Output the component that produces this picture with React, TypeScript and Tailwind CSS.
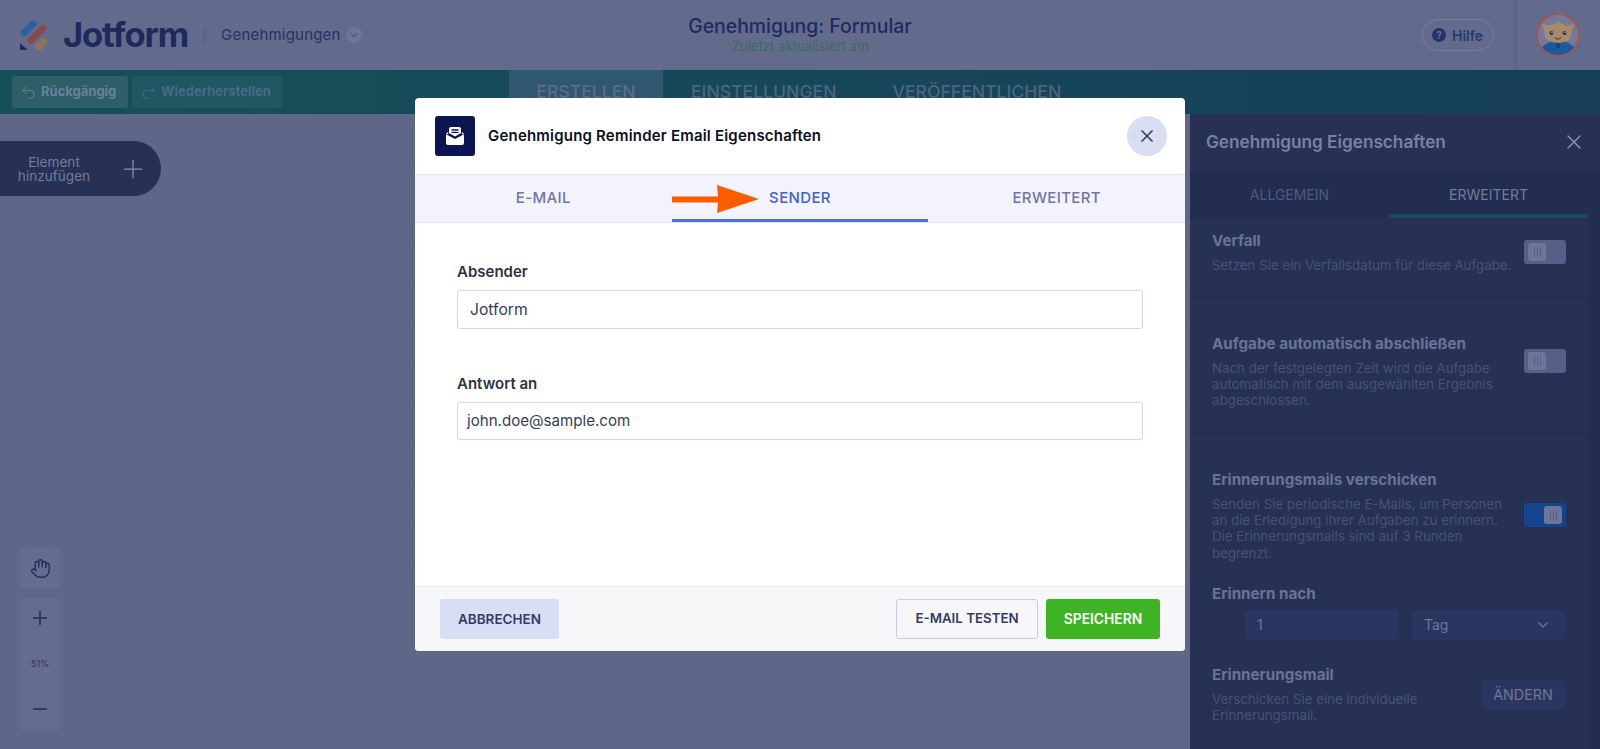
import { ChevronDown, Hand, Minus, Plus, Redo2, Undo2, X } from "lucide-react";

function Logo() {
  return (
    <svg width="30" height="32" viewBox="19 16 30 32" className="shrink-0">
      <line x1="24" y1="29.5" x2="33" y2="21" stroke="#2a60a4" strokeWidth="7" strokeLinecap="round" />
      <line x1="31" y1="37" x2="43" y2="25.5" stroke="#87494f" strokeWidth="7" strokeLinecap="round" />
      <line x1="38.5" y1="43.5" x2="43.5" y2="38.5" stroke="#8f7353" strokeWidth="7" strokeLinecap="round" />
      <path d="M20 40 L27.5 47 H21.5 Q20 47 20 45.5 Z" fill="#1c2a5c" />
    </svg>
  );
}

function Avatar() {
  return (
    <svg width="44" height="44" viewBox="0 0 44 44" className="shrink-0">
      <defs>
        <clipPath id="av"><circle cx="22" cy="22" r="20" /></clipPath>
      </defs>
      <circle cx="22" cy="22" r="21" fill="#74799c" stroke="#a5544c" strokeWidth="1.8" />
      <g clipPath="url(#av)">
        <path d="M3 44 L5 35 Q10 30 16 28 H28 Q34 30 39 35 L41 44 Z" fill="#1c5a9c" />
        <path d="M20 29 h4 v6 h-4 Z" fill="#16467e" />
        <path d="M6 11 L14 12.5 Q18 10.5 20 10 L21.5 7.5 L24 10 Q27 10.5 30 12.5 L38 11 L35.5 19 Q37 29 22 30 Q7 29 8.5 19 Z" fill="#a68a6a" />
        <circle cx="15.5" cy="20" r="2" fill="#28325c" />
        <circle cx="16" cy="19.4" r="0.6" fill="#c8cce0" />
        <circle cx="28.5" cy="20" r="2" fill="#28325c" />
        <circle cx="29" cy="19.4" r="0.6" fill="#c8cce0" />
        <path d="M19 24.5 Q22 27.5 25 24.5" stroke="#7c3a58" strokeWidth="1.3" fill="none" />
      </g>
    </svg>
  );
}

function MailIcon() {
  return (
    <svg width="20" height="20" viewBox="0 0 20 20">
      <path d="M4 7 V3 a2 2 0 0 1 2-2 h8 a2 2 0 0 1 2 2 V7 L10 10.5 Z" fill="#fff" />
      <rect x="6.5" y="3.2" width="7" height="1.5" fill="#0a1551" />
      <rect x="6.5" y="5.8" width="7" height="1.3" fill="#0a1551" />
      <path d="M1 8.2 L10 13 L19 8.2 V17 a2 2 0 0 1-2 2 H3 a2 2 0 0 1-2-2 Z" fill="#fff" />
      <path d="M1 7.5 L3.2 6 V8.6 Z M19 7.5 L16.8 6 V8.6 Z" fill="#fff" />
    </svg>
  );
}

function Toggle({ on }: { on?: boolean }) {
  return (
    <div className={`flex h-6 w-[42px] shrink-0 items-center rounded-[3px] px-1 ${on ? "justify-end bg-[#15448f]" : "justify-start bg-[#565f87]"}`}>
      <div className="flex h-[18px] w-[18px] items-center justify-center gap-[2px] rounded-[3px] bg-[#6e7597]">
        <span className="h-2.5 w-px bg-[#565f87]" />
        <span className="h-2.5 w-px bg-[#565f87]" />
        <span className="h-2.5 w-px bg-[#565f87]" />
      </div>
    </div>
  );
}

const tabTitle = "text-[15.2px] font-bold leading-5 text-[#6a7396]";
const desc = "text-[13.3px] leading-[16.2px] text-[#485274]";

export default function App() {
  return (
    <div className="relative flex h-[749px] w-full flex-col overflow-hidden bg-[#5f6688] font-['Inter','Liberation_Sans',sans-serif]">
      <header className="grid h-[70px] shrink-0 grid-cols-[1fr_auto_1fr] items-center bg-[#636b8c]">
        <div className="flex items-center pl-[19px]">
          <Logo />
          <span className="ml-[14px] text-[34.5px] font-bold leading-none tracking-[-1.1px] text-[#1c2a5c]">Jotform</span>
          <span className="ml-[16px] h-[18px] w-px bg-[#565e82]" />
          <span className="ml-[16px] text-[15px] tracking-[0.2px] text-[#263365]">Genehmigungen</span>
          <span className="ml-[5px] flex h-4 w-4 items-center justify-center rounded-full bg-[#6e7597]">
            <ChevronDown size={12} strokeWidth={1.6} className="text-[#263365]" />
          </span>
        </div>
        <div className="flex flex-col items-center pb-[2px]">
          <span className="text-[19.4px] font-medium leading-6 text-[#1e2a5e]">Genehmigung: Formular</span>
          <span className="-mt-px text-[13.2px] leading-[18px] text-[#3a6a5e]">Zuletzt aktualisiert am</span>
        </div>
        <div className="flex h-full items-center justify-end">
          <div className="flex h-8 w-[72px] items-center rounded-full border border-[#747ca2] pl-[9px]">
            <span className="flex h-[14px] w-[14px] items-center justify-center rounded-full bg-[#243272] text-[10px] font-bold text-[#636b8c]">?</span>
            <span className="ml-[6px] text-[14px] font-semibold text-[#263a72]">Hilfe</span>
          </div>
          <div className="ml-[21px] flex h-full w-[85px] items-center justify-center border-l border-[#565e82]">
            <Avatar />
          </div>
        </div>
      </header>

      <div className="flex h-[44px] shrink-0 bg-gradient-to-r from-[#155058] to-[#173f58]">
        <div className="flex w-[509px] shrink-0 items-center gap-1 pl-3">
          <div className="flex h-8 w-[116px] items-center gap-1 rounded-[3px] bg-[#2e5f68] pl-2 text-[13px] font-bold text-[#69819a]">
            <Undo2 size={17} strokeWidth={1.3} />
            Rückgängig
          </div>
          <div className="flex h-8 w-[151px] items-center gap-1 rounded-[3px] bg-[#205562] pl-2 text-[13px] font-bold text-[#436d82]">
            <Redo2 size={17} strokeWidth={1.3} />
            Wiederherstellen
          </div>
        </div>
        <div className="flex items-center text-[17.6px] font-medium text-[#5a6b8c]">
          <div className="flex h-full w-[154px] items-center justify-center bg-[#2f5870]">ERSTELLEN</div>
          <div className="flex h-full items-center px-7 text-[#4b6480]">EINSTELLUNGEN</div>
          <div className="flex h-full items-center px-7 text-[#4b6480]">VERÖFFENTLICHEN</div>
        </div>
      </div>

      <div className="flex min-h-0 flex-1">
        <main className="flex min-w-0 flex-1 flex-col justify-between bg-[radial-gradient(#62698b_1px,transparent_1px)] bg-[length:20px_20px] pb-5 pt-[27px]">
          <div className="flex h-[55px] w-[161px] items-center rounded-r-full bg-[#263154] pl-[14px]">
            <span className="w-[80px] text-center text-[13.6px] leading-[14px] text-[#747c9c]">Element hinzufügen</span>
            <Plus size={30} strokeWidth={1} className="ml-[24px] text-[#8a90ac]" />
          </div>
          <div className="ml-5 flex w-10 flex-col gap-[10px] self-start">
            <div className="flex h-10 w-10 items-center justify-center rounded-[3px] bg-[#656c8e]">
              <Hand size={21} strokeWidth={1.5} className="text-[#1e2a5e]" />
            </div>
            <div className="flex h-[131px] w-10 flex-col items-center justify-between rounded-[3px] bg-[#656c8e] py-[9px]">
              <Plus size={22} strokeWidth={1.6} className="text-[#1e2a5e]" />
              <span className="text-[9px] text-[#2c3560]">51%</span>
              <Minus size={22} strokeWidth={1.6} className="text-[#1e2a5e]" />
            </div>
          </div>
        </main>

        <aside className="flex w-[410px] shrink-0 flex-col bg-[#263154]">
          <div className="flex h-[56px] shrink-0 items-center justify-between pl-4 pr-[14px]">
            <span className="text-[17.2px] font-semibold text-[#7a82a2]">Genehmigung Eigenschaften</span>
            <X size={24} strokeWidth={1.5} className="text-[#8a90ac]" />
          </div>
          <div className="flex min-h-0 flex-1 bg-[#232d50]">
            <div className="flex w-[398px] flex-col bg-[#263154]">
              <div className="flex h-[48px] shrink-0 bg-[#232d50] text-[14px] text-[#4f5a7e]">
                <div className="flex w-1/2 items-center justify-center">ALLGEMEIN</div>
                <div className="flex w-1/2 items-center justify-center border-b-4 border-[#1a4a5e] pt-1 text-[#737b9c]">ERWEITERT</div>
              </div>
              <section className="flex h-[81px] shrink-0 items-start justify-between border-b border-[#222c4e] pl-[22px] pr-[22px] pt-[13px]">
                <div>
                  <div className={tabTitle}>Verfall</div>
                  <div className={`${desc} mt-[6px] whitespace-nowrap`}>Setzen Sie ein Verfallsdatum für diese Aufgabe.</div>
                </div>
                <div className="pt-[9px]"><Toggle /></div>
              </section>
              <section className="flex h-[136px] shrink-0 items-start justify-between border-b border-[#222c4e] pl-[22px] pr-[22px] pt-[35px]">
                <div className="w-[290px]">
                  <div className={`${tabTitle} whitespace-nowrap`}>Aufgabe automatisch abschließen</div>
                  <div className={`${desc} mt-[6px]`}>Nach der festgelegten Zeit wird die Aufgabe automatisch mit dem ausgewählten Ergebnis abgeschlossen.</div>
                </div>
                <div className="pt-[15px]"><Toggle /></div>
              </section>
              <section className="flex flex-col pl-[22px] pr-[22px] pt-[35px]">
                <div className="flex items-start justify-between">
                  <div className="w-[295px]">
                    <div className={tabTitle}>Erinnerungsmails verschicken</div>
                    <div className={`${desc} mt-[6px]`}>Senden Sie periodische E-Mails, um Personen an die Erledigung ihrer Aufgaben zu erinnern. Die Erinnerungsmails sind auf 3 Runden begrenzt.</div>
                  </div>
                  <div className="pt-[33px]"><Toggle on /></div>
                </div>
                <div className={`${tabTitle} mt-[23px]`}>Erinnern nach</div>
                <div className="mt-[6px] flex justify-end gap-[14px] pr-px">
                  <div className="flex h-[30px] w-[153px] items-center rounded-[2px] bg-[#2b3660] pl-3 text-[14px] text-[#6d7698]">1</div>
                  <div className="flex h-[30px] w-[153px] items-center justify-between rounded-[2px] bg-[#2b3660] pl-3 pr-[14px] text-[14px] text-[#6d7698]">
                    Tag
                    <ChevronDown size={16} strokeWidth={2} />
                  </div>
                </div>
                <div className="mt-[25px] flex items-start justify-between">
                  <div className="w-[240px]">
                    <div className={tabTitle}>Erinnerungsmail</div>
                    <div className={`${desc} mt-[6px]`}>Verschicken Sie eine individuelle Erinnerungsmail.</div>
                  </div>
                  <div className="mr-px mt-[15px] flex h-[30px] w-[84px] items-center justify-center rounded-[2px] bg-[#2b3660] text-[14.3px] text-[#6d7698]">ÄNDERN</div>
                </div>
              </section>
            </div>
          </div>
        </aside>
      </div>

      <div className="absolute left-[415px] top-[98px] flex h-[553px] w-[770px] flex-col overflow-hidden rounded-[4px] bg-white">
        <div className="flex h-[76px] shrink-0 items-center pl-5 pr-[18px]">
          <div className="flex h-10 w-10 items-center justify-center rounded-[3px] bg-[#0a1551]">
            <MailIcon />
          </div>
          <span className="ml-[13px] flex-1 text-[15px] font-semibold tracking-[0.2px] text-[#0a1024]">Genehmigung Reminder Email Eigenschaften</span>
          <div className="flex h-10 w-10 items-center justify-center rounded-full bg-[#dadef3]">
            <X size={20} strokeWidth={2} className="text-[#343c6a]" />
          </div>
        </div>
        <div className="relative flex h-[49px] shrink-0 border-y border-[#e3e5f5] bg-[#f3f3fe] text-[15px] font-medium tracking-[0.35px] text-[#6f76a7]">
          <div className="flex flex-1 items-center justify-center">E-MAIL</div>
          <div className="flex flex-1 items-center justify-center border-b-[3px] border-[#4c6ee0] pt-[3px] text-[#3e62c8]">SENDER</div>
          <div className="flex flex-1 items-center justify-center">ERWEITERT</div>
          <svg width="88" height="30" viewBox="0 0 88 30" className="absolute left-[257px] top-[10px]">
            <path d="M0 11.5 L46 11.5 L45 0 L87 14 L45 28 L46 17.5 L0 17.5 Z" fill="#ff5c00" />
          </svg>
        </div>
        <div className="flex flex-1 flex-col px-[42px] pt-[39px]">
          <label className="text-[15px] font-semibold leading-5 text-[#2c3345]">Absender</label>
          <div className="mt-[8px] flex h-[39px] items-center rounded-[3px] border border-[#d3d8ee] pl-[12px] pt-px text-[15.7px] text-[#343c5a]">Jotform</div>
          <label className="mt-[45px] text-[15px] font-semibold leading-5 text-[#2c3345]">Antwort an</label>
          <div className="mt-[8px] flex h-[38px] items-center rounded-[3px] border border-[#d3d8ee] pl-[9px] text-[15.1px] text-[#343c5a]">john.doe@sample.com</div>
        </div>
        <div className="flex h-[65px] shrink-0 items-center justify-between border-t border-[#e6e7f1] bg-[#f7f7fa] pl-[25px] pr-[25px]">
          <div className="flex h-10 w-[119px] items-center justify-center rounded-[3px] bg-[#d8def3] text-[13.5px] font-semibold text-[#343c6a]">ABBRECHEN</div>
          <div className="flex gap-2">
            <div className="flex h-10 w-[142px] items-center justify-center rounded-[3px] border border-[#c5cdeb] text-[13.3px] font-semibold text-[#343c6a]">E-MAIL TESTEN</div>
            <div className="flex h-10 w-[114px] items-center justify-center rounded-[3px] bg-[#3eb324] text-[13.8px] font-semibold text-white">SPEICHERN</div>
          </div>
        </div>
      </div>
    </div>
  );
}
